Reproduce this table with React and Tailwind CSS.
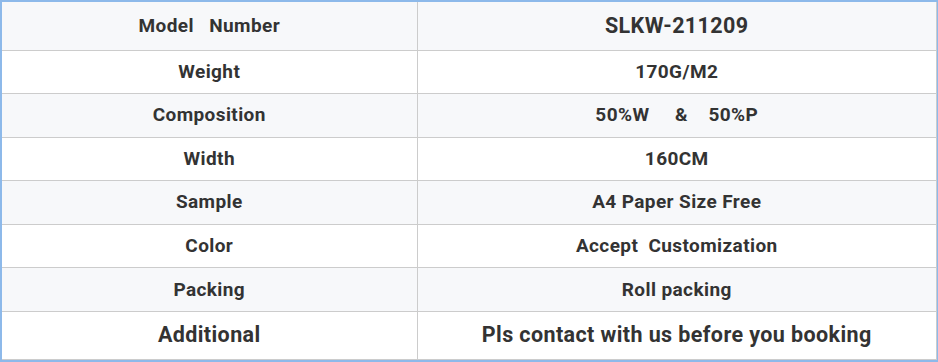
import React from 'react';

const rows = [
  { label: 'Model\u00a0\u00a0 Number', value: 'SLKW-211209', big: 'value', h: 'h-[48px]' },
  { label: 'Weight', value: '170G/M2' },
  { label: 'Composition', value: '50%W\u00a0\u00a0\u00a0\u00a0 &\u00a0\u00a0\u00a0 50%P' },
  { label: 'Width', value: '160CM' },
  { label: 'Sample', value: 'A4 Paper Size Free' },
  { label: 'Color', value: 'Accept\u00a0 Customization' },
  { label: 'Packing', value: 'Roll packing' },
  { label: 'Additional', value: 'Pls contact with us before you booking', big: 'both', h: 'h-[48px]' },
];

const App = () => {
  return (
    <div className="w-[938px] h-[362px] bg-white border-t-2 border-l-2 border-r border-b-[3px] border-[#8db9ea] font-['Roboto','Liberation_Sans',sans-serif] text-[#333] tracking-[0.4px]">
      <table className="w-full border-collapse table-fixed">
        <colgroup>
          <col className="w-[415px]" />
          <col />
        </colgroup>
        <tbody>
          {rows.map((row, i) => (
            <tr key={i} className={`${i % 2 === 0 ? 'bg-[#f7f8fa]' : 'bg-white'} ${row.h || 'h-[43.6px]'}`}>
              <td
                className={`border border-[#cccccc] border-l-0 text-center font-bold p-0 ${
                  row.big === 'both' ? 'text-[21.5px]' : 'text-[19px]'
                } ${i === 0 ? 'border-t-0' : ''}`}
              >
                {row.label}
              </td>
              <td
                className={`border border-[#cccccc] text-center font-bold p-0 ${
                  row.big ? 'text-[21.5px]' : 'text-[19px]'
                } ${i === 0 ? 'border-t-0' : ''}`}
              >
                {row.value}
              </td>
            </tr>
          ))}
        </tbody>
      </table>
    </div>
  );
};

export default App;
